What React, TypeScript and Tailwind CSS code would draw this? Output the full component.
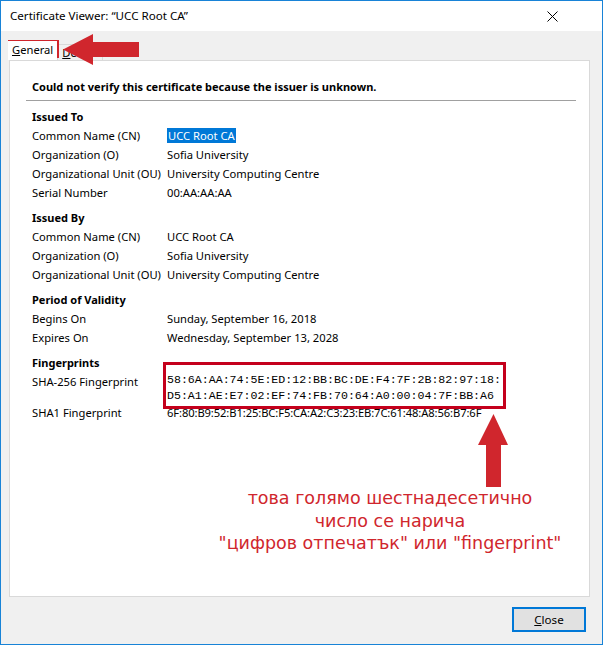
import React from "react";

const rowLabel = "w-[135px] shrink-0 whitespace-nowrap";

type Row = { label: string; value: string; selected?: boolean };

const sections: { title: string; rows: Row[] }[] = [
  {
    title: "Issued To",
    rows: [
      { label: "Common Name (CN)", value: "UCC Root CA", selected: true },
      { label: "Organization (O)", value: "Sofia University" },
      { label: "Organizational Unit (OU)", value: "University Computing Centre" },
      { label: "Serial Number", value: "00:AA:AA:AA" },
    ],
  },
  {
    title: "Issued By",
    rows: [
      { label: "Common Name (CN)", value: "UCC Root CA" },
      { label: "Organization (O)", value: "Sofia University" },
      { label: "Organizational Unit (OU)", value: "University Computing Centre" },
    ],
  },
  {
    title: "Period of Validity",
    rows: [
      { label: "Begins On", value: "Sunday, September 16, 2018" },
      { label: "Expires On", value: "Wednesday, September 13, 2028" },
    ],
  },
];

function Section({ title, rows }: { title: string; rows: Row[] }) {
  return (
    <div className="mt-[6px] flex flex-col">
      <div className="h-[19px] text-[11px] font-bold leading-[19px]">{title}</div>
      {rows.map((r) => (
        <div key={r.label} className="flex h-[19px] leading-[19px]">
          <div className={rowLabel}>{r.label}</div>
          <div className="whitespace-nowrap">
            {r.selected ? (
              <span className="bg-[#0078d7] px-px text-white">{r.value}</span>
            ) : (
              r.value
            )}
          </div>
        </div>
      ))}
    </div>
  );
}

export default function App() {
  return (
    <div className="relative flex h-[645px] w-[603px] flex-col border border-[#1883d7] bg-[#f0f0f0] font-['Noto_Sans','Open_Sans',sans-serif] text-[11.2px] text-black">
      {/* title bar */}
      <div className="flex h-[30px] shrink-0 items-center justify-between bg-white pl-[9px] pr-[44px]">
        <span className="text-[11.6px]">Certificate Viewer: “UCC Root CA”</span>
        <svg width="11" height="11" viewBox="0 0 11 11">
          <path d="M0.5 0.5 L10.5 10.5 M10.5 0.5 L0.5 10.5" stroke="#000" strokeWidth="1" />
        </svg>
      </div>

      {/* tabs */}
      <div className="mt-[10px] flex h-[19px] items-end pl-[7px]">
        <div className="z-10 flex h-[19px] items-start bg-white px-[4px] pt-px leading-[16px]">
          <span>
            <span className="underline">G</span>eneral
          </span>
        </div>
        <div className="flex h-[16px] items-center border border-b-0 border-[#d9d9d9] px-[4px] leading-[14px]">
          <span>
            <span className="underline">D</span>etails
          </span>
        </div>
      </div>

      {/* panel */}
      <div className="mr-[12px] ml-[8px] flex h-[537px] flex-col border border-[#d9d9d9] bg-white">
        <div className="pt-[16px] pl-[22px] text-[11px] font-bold leading-[19px]">
          Could not verify this certificate because the issuer is unknown.
        </div>
        <div className="mt-[4px] mr-[13px] ml-[16px] h-px bg-[#a0a0a0]" />
        <div className="flex flex-col pl-[22px]">
          {sections.map((s) => (
            <Section key={s.title} title={s.title} rows={s.rows} />
          ))}
          <div className="mt-[6px] flex flex-col">
            <div className="h-[19px] text-[11px] font-bold leading-[19px]">Fingerprints</div>
            <div className="flex">
              <div className={`${rowLabel} leading-[19px]`}>SHA-256 Fingerprint</div>
              <div className="font-['Liberation_Mono',monospace] text-[11.6px] leading-[16px]">
                <div>58:6A:AA:74:5E:ED:12:BB:BC:DE:F4:7F:2B:82:97:18:</div>
                <div>D5:A1:AE:E7:02:EF:74:FB:70:64:A0:00:04:7F:BB:A6</div>
              </div>
            </div>
            <div className="-mt-[1px] flex h-[19px] leading-[19px]">
              <div className={rowLabel}>SHA1 Fingerprint</div>
              <div className="whitespace-nowrap tracking-[-0.1px]">
                6F:80:B9:52:B1:25:BC:F5:CA:A2:C3:23:EB:7C:61:48:A8:56:B7:6F
              </div>
            </div>
          </div>
        </div>
      </div>

      {/* footer */}
      <div className="flex flex-1 items-start justify-end pt-[10px] pr-[16px]">
        <button className="flex h-[25px] w-[74px] items-center justify-center border-2 border-[#0078d7] bg-[#e1e1e1] text-[11.6px] leading-none">
          <span>
            <span className="underline">C</span>lose
          </span>
        </button>
      </div>

      {/* annotations */}
      <div className="absolute top-[39px] left-[7px] h-[18px] w-[51px] border-2 border-[#d0242b]" />
      <svg className="absolute top-[32px] left-[61px]" width="78" height="33" viewBox="0 0 78 33">
        <polygon points="1,16.5 31,1 31,9 77,9 77,24 31,24 31,32" fill="#d0262d" />
      </svg>
      <div className="absolute top-[361px] left-[162px] h-[47px] w-[343px] border-[3px] border-[#c4001c]" />
      <svg className="absolute top-[412px] left-[476px]" width="32" height="75" viewBox="0 0 32 75">
        <polygon points="16.5,1 31,32 24,32 24,74 9,74 9,32 1,32" fill="#d0262d" />
      </svg>
      <div className="absolute top-[486px] left-[189px] w-[400px] text-center font-['DejaVu_Sans',sans-serif] text-[17.5px] leading-[22.5px] text-[#d0262d]">
        <div>това голямо шестнадесетично</div>
        <div>число се нарича</div>
        <div>"цифров отпечатък" или "fingerprint"</div>
      </div>
    </div>
  );
}
